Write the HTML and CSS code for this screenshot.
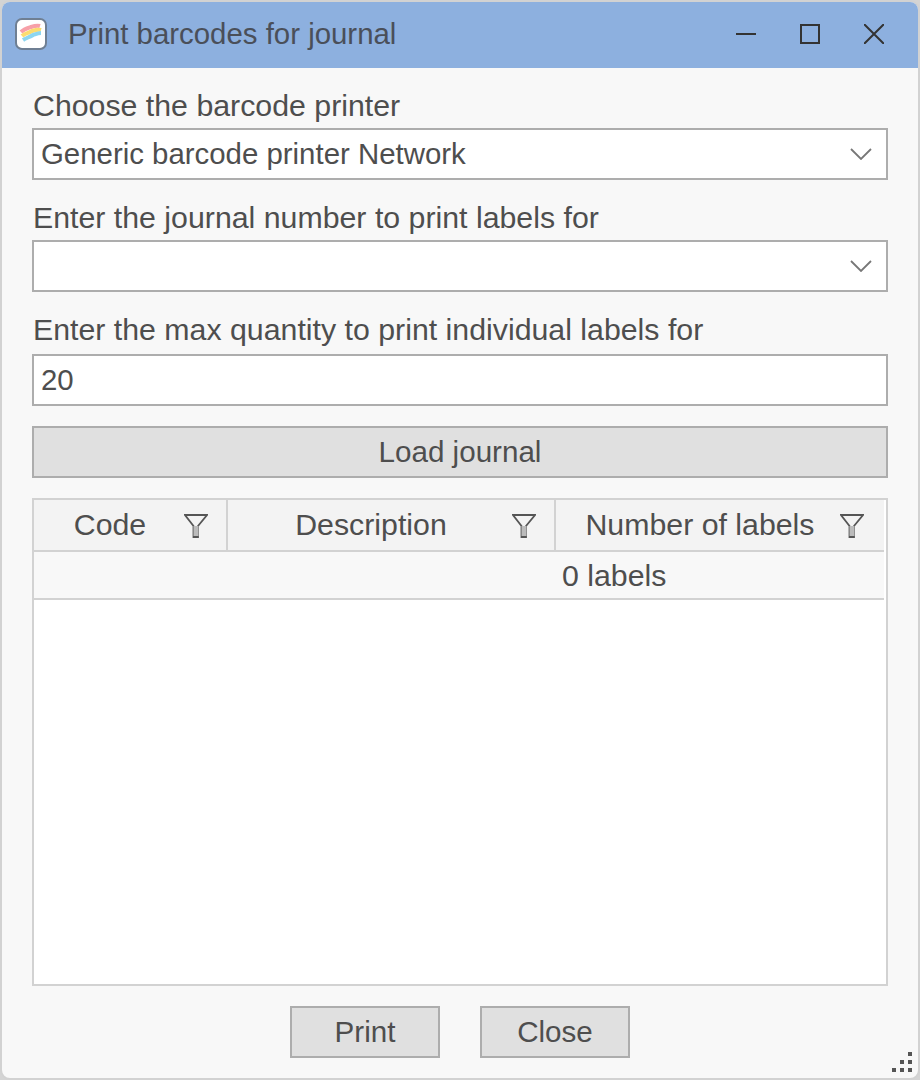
FILE: index.html
```html
<!DOCTYPE html>
<html lang="en">
<head>
  <meta charset="UTF-8" />
  <title>Print barcodes for journal</title>
  <link rel="stylesheet" href="styles.css">
</head>
<body>

  <div class="window">
    <div class="titlebar">
      <svg class="app-icon" width="32" height="32" viewBox="0 0 32 32">
        <rect x="1" y="1" width="30" height="30" rx="6" fill="#fff" stroke="#6f7f93" stroke-width="2"/>
        <path d="M6 14 C9 11 13 10 16 9 C19 8 22 7 25 8" fill="none" stroke="#f7a0a8" stroke-width="4"/>
        <path d="M7 18 C10 15 14 15 17 13 C20 12 23 11 26 12" fill="none" stroke="#fbdc70" stroke-width="4"/>
        <path d="M8 22 C11 20 15 19 18 17 C21 16 23 15 26 15" fill="none" stroke="#8dd6f0" stroke-width="4"/>
      </svg>
      <div class="title">Print barcodes for journal</div>
      <div class="win-controls">
        <svg width="20" height="20" viewBox="0 0 20 20"><path d="M0 10H20" stroke="#333" stroke-width="2"/></svg>
        <svg width="20" height="20" viewBox="0 0 20 20"><rect x="1" y="1" width="18" height="18" fill="none" stroke="#333" stroke-width="2"/></svg>
        <svg width="20" height="20" viewBox="0 0 20 20"><path d="M0 0L20 20M20 0L0 20" stroke="#333" stroke-width="2"/></svg>
      </div>
    </div>

    <div class="content">
      <label class="field-label">Choose the barcode printer</label>
      <div class="select">
        <span>Generic barcode printer Network</span>
        <svg width="22" height="12" viewBox="0 0 22 12"><path d="M1 1L11 11L21 1" fill="none" stroke="#777" stroke-width="1.8"/></svg>
      </div>

      <label class="field-label">Enter the journal number to print labels for</label>
      <div class="select">
        <span></span>
        <svg width="22" height="12" viewBox="0 0 22 12"><path d="M1 1L11 11L21 1" fill="none" stroke="#777" stroke-width="1.8"/></svg>
      </div>

      <label class="field-label field-label-tall">Enter the max quantity to print individual labels for</label>
      <div class="select"><span>20</span></div>

      <button class="btn btn-load">Load journal</button>

      <div class="grid">
        <div class="grid-head">
          <div class="col col-code"><span class="col-name">Code</span>
            <svg class="filter" width="24" height="24" viewBox="0 0 24 24"><path d="M1 1H23L14 12V23H9.500V12Z" fill="none" stroke="#555" stroke-width="1.800"/><rect x="9.500" y="12" width="5" height="10" fill="#bbb"/></svg>
          </div>
          <div class="col col-desc"><span class="col-name">Description</span>
            <svg class="filter" width="24" height="24" viewBox="0 0 24 24"><path d="M1 1H23L14 12V23H9.500V12Z" fill="none" stroke="#555" stroke-width="1.800"/><rect x="9.500" y="12" width="5" height="10" fill="#bbb"/></svg>
          </div>
          <div class="col col-num"><span class="col-name">Number of labels</span>
            <svg class="filter" width="24" height="24" viewBox="0 0 24 24"><path d="M1 1H23L14 12V23H9.500V12Z" fill="none" stroke="#555" stroke-width="1.800"/><rect x="9.500" y="12" width="5" height="10" fill="#bbb"/></svg>
          </div>
        </div>
        <div class="grid-summary">
          <div class="sum-empty"></div>
          <div class="sum-cell">0 labels</div>
        </div>
      </div>

      <div class="footer">
        <button class="btn btn-small">Print</button>
        <button class="btn btn-small">Close</button>
      </div>
    </div>

    <div class="grip">
      <i></i><i></i><i></i><i></i><i></i><i></i>
    </div>
  </div>

</body>
</html>
```

FILE: styles.css
```css
* {
  box-sizing: border-box;
}

body {
  margin: 0;
  background-color: #d4d4d4;
  font-family: "Liberation Sans", Arial, sans-serif;
  font-size: 30.3px;
  color: #4e4e4e;
}

.window {
  position: relative;
  display: flex;
  flex-direction: column;
  width: 920px;
  height: 1080px;
  border: 2px solid #d2d2d2;
  border-radius: 10px;
  background-color: #f8f8f8;
  overflow: hidden;
}

.titlebar {
  display: flex;
  align-items: center;
  height: 66px;
  padding: 0 0 2px 13px;
  background-color: #8db0df;
  flex-shrink: 0;
}

.app-icon {
  margin-right: 21px;
}

.title {
  flex: 1;
  font-size: 29.4px;
  color: #4a4f59;
}

.win-controls {
  display: flex;
  gap: 44px;
  padding-right: 34px;
}

.content {
  display: flex;
  flex-direction: column;
  flex: 1;
  padding: 20px 30px 20px;
}

.field-label {
  height: 40px;
  padding-left: 1px;
  line-height: 36px;
}

.field-label-tall {
  height: 42px;
}

.select {
  display: flex;
  align-items: center;
  justify-content: space-between;
  height: 52px;
  padding: 0 14px 0 7px;
  margin-bottom: 20px;
  border: 2px solid #adadad;
  background-color: #fff;
  font-size: 29.4px;
}

.btn {
  height: 52px;
  border: 2px solid #adadad;
  border-radius: 0;
  background-color: #e0e0e0;
  color: #4e4e4e;
  font-family: inherit;
  font-size: 29.6px;
  padding: 0;
}

.btn-load {
  margin-bottom: 20px;
}

.grid {
  flex: 1;
  border: 2px solid #d2d2d2;
  background-color: #fff;
}

.grid-head {
  display: flex;
  height: 52px;
  margin-right: 2px;
  border-bottom: 2px solid #d2d2d2;
  background-color: #f3f3f3;
}

.col {
  display: flex;
  align-items: center;
  justify-content: center;
  position: relative;
  border-right: 2px solid #d2d2d2;
}

.col-code {
  width: 194px;
}

.col-desc {
  width: 328px;
}

.col-num {
  flex: 1;
  border-right: none;
}

.col-name {
  margin-right: 40px;
}

.filter {
  position: absolute;
  right: 18px;
  top: 14px;
}

.col-num .filter {
  right: 20px;
}

.grid-summary {
  display: flex;
  height: 48px;
  margin-right: 2px;
  border-bottom: 2px solid #d2d2d2;
  background-color: #f8f8f8;
}

.sum-empty {
  width: 522px;
}

.sum-cell {
  flex: 1;
  line-height: 48px;
  padding-left: 6px;
}

.footer {
  display: flex;
  justify-content: center;
  gap: 40px;
  margin-top: 20px;
}

.btn-small {
  width: 150px;
}

.grip {
  position: absolute;
  right: 6px;
  bottom: 6px;
  display: grid;
  grid-template-columns: repeat(3, 4px);
  grid-template-rows: repeat(3, 4px);
  gap: 4px;
}

.grip i {
  background-color: #555;
}

.grip i:nth-child(1) {
  grid-area: 1 / 3;
}

.grip i:nth-child(2) {
  grid-area: 2 / 2;
}

.grip i:nth-child(3) {
  grid-area: 2 / 3;
}

.grip i:nth-child(4) {
  grid-area: 3 / 1;
}

.grip i:nth-child(5) {
  grid-area: 3 / 2;
}

.grip i:nth-child(6) {
  grid-area: 3 / 3;
}
```
